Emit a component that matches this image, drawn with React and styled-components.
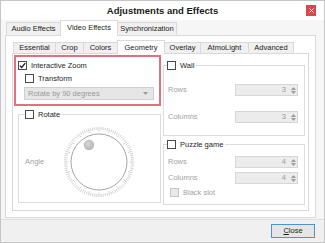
import React from 'react';
import styled, { createGlobalStyle } from 'styled-components';

const Global = createGlobalStyle`
  html, body { margin: 0; padding: 0; background: #ffffff; }
  body { font-family: "Liberation Sans", Arial, sans-serif; }
  #root { width: 325px; height: 243px; }
`;

const Window = styled.div`
  width: 325px;
  height: 243px;
  box-sizing: border-box;
  border: 1px solid #c6c6c6;
  background: #f6f6f6;
  display: flex;
  flex-direction: column;
  font-size: 7.5px;
  color: #1e1e1e;
  overflow: hidden;
`;

const TitleBar = styled.div`
  height: 19px;
  flex: none;
  background: #ffffff;
  display: grid;
  grid-template-columns: 1fr auto 1fr;
  align-items: center;
`;

const Title = styled.div`
  grid-column: 2;
  font-weight: bold;
  font-size: 9.5px;
  color: #1a1a1a;
`;

const CloseX = styled.div`
  grid-column: 3;
  justify-self: end;
  margin-right: 8px;
  width: 10px;
  height: 11px;
  background: #d8474b;
  display: flex;
  align-items: center;
  justify-content: center;
`;

const Body = styled.div`
  flex: 1;
  display: flex;
  flex-direction: column;
  padding: 0 8px 1px 4px;
  min-height: 0;
`;

const TabRow = styled.div`
  display: flex;
  align-items: flex-start;
  height: ${p => p.$h}px;
  margin-bottom: -1px;
  padding-left: ${p => p.$pl}px;
  margin-top: ${p => p.$mt || 0}px;
  position: relative;
  z-index: 1;
  flex: none;
`;

const Tab = styled.div`
  box-sizing: border-box;
  width: ${p => p.$w}px;
  height: ${p => (p.$active ? p.$h + 3 : p.$h)}px;
  margin-top: ${p => (p.$active ? 0 : 2)}px;
  border: 1px solid #d9d9d9;
  border-bottom: ${p => (p.$active ? 'none' : '1px solid transparent')};
  margin-left: -1px;
  background: ${p => (p.$active ? '#ffffff' : '#f0f0f0')};
  display: flex;
  align-items: ${p => (p.$active ? 'flex-start' : 'center')};
  padding-top: ${p => (p.$active ? 3 : 0)}px;
  justify-content: center;
  color: #222;
  white-space: nowrap;
  line-height: 1;
`;

const Pane = styled.div`
  flex: 1;
  min-height: 0;
  border: 1px solid #d9d9d9;
  background: #ffffff;
  display: flex;
  flex-direction: column;
`;

const InnerPane = styled.div`
  flex: 1;
  min-height: 0;
  margin: 0 6px 6px 6px;
  border: 1px solid #d9d9d9;
  background: #ffffff;
  display: grid;
  grid-template-columns: 147px 142px;
  column-gap: 2px;
  padding: 1px 0 0 1px;
  align-items: start;
`;

const Column = styled.div`
  display: flex;
  flex-direction: column;
`;

const Highlight = styled.div`
  border: 2px solid #e3707c;
  padding: 4px 5px 4px 2px;
  display: flex;
  flex-direction: column;
  gap: 4px;
`;

const CheckRow = styled.label`
  display: flex;
  align-items: center;
  gap: 4px;
  height: 9px;
  margin-left: ${p => p.$indent || 0}px;
  color: ${p => (p.$disabled ? '#a2a2a2' : '#1e1e1e')};
  line-height: 1;
  white-space: nowrap;
`;

const Box = styled.span`
  box-sizing: border-box;
  width: 9px;
  height: 9px;
  flex: none;
  border: 1px solid ${p => (p.$disabled ? '#c4c4c4' : '#4a4a4a')};
  background: ${p => (p.$disabled ? '#e9e9e9' : '#ffffff')};
  display: flex;
  align-items: center;
  justify-content: center;
`;

const Combo = styled.div`
  box-sizing: border-box;
  height: 13px;
  margin-left: 6px;
  border: 1px solid #cfcfcf;
  background: #e6e6e6;
  color: #9a9a9a;
  display: flex;
  align-items: center;
  justify-content: space-between;
  padding: 0 5px 0 3px;
  line-height: 1;
`;

const Group = styled.div`
  border: 1px solid #dcdcdc;
  margin-top: ${p => p.$mt}px;
  margin-left: ${p => p.$ml || 0}px;
  height: ${p => p.$h}px;
  box-sizing: border-box;
  display: flex;
  flex-direction: column;
`;

const Legend = styled.div`
  margin-top: -5px;
  margin-left: ${p => p.$ml}px;
  align-self: flex-start;
  background: #ffffff;
  padding-right: 2px;
`;

const DialRow = styled.div`
  flex: 1;
  display: flex;
  align-items: center;
  padding: 5px 0 2px 6px;
  gap: 19px;
`;

const Muted = styled.span`
  color: #a2a2a2;
  line-height: 1;
`;

const Form = styled.div`
  display: flex;
  flex-direction: column;
  gap: ${p => p.$gap}px;
  padding: ${p => p.$pt}px 6px 0 4px;
`;

const FormRow = styled.div`
  display: flex;
  align-items: center;
  justify-content: space-between;
  height: 12px;
`;

const Spin = styled.div`
  box-sizing: border-box;
  width: 63px;
  height: 12px;
  border: 1px solid #d6d6d6;
  background: #ececec;
  display: flex;
  align-items: center;
  justify-content: flex-end;
  color: #9a9a9a;
  line-height: 1;
`;

const SpinArrows = styled.div`
  width: 8px;
  height: 100%;
  margin-left: 3px;
  display: flex;
  flex-direction: column;
  align-items: center;
  justify-content: center;
  gap: 1px;
`;

const ButtonBar = styled.div`
  height: 22px;
  flex: none;
  background: #f0f0f0;
  border-top: 1px solid #dedede;
  display: flex;
  align-items: center;
  justify-content: flex-end;
  padding-right: 9px;
`;

const Button = styled.div`
  box-sizing: border-box;
  width: 44px;
  height: 14px;
  border: 1px solid #4a94d8;
  background: #e5e5e5;
  display: flex;
  align-items: center;
  justify-content: center;
  color: #1e1e1e;
  line-height: 1;
  span { text-decoration: underline; }
`;

const Check = () => (
  <svg width="7" height="7" viewBox="0 0 7 7">
    <path d="M0.8 3.6 L2.7 5.5 L6.2 1.2" fill="none" stroke="#1a1a1a" strokeWidth="1.3" />
  </svg>
);

const Tri = ({ up }) => (
  <svg width="5" height="3" viewBox="0 0 5 3">
    <path d={up ? 'M0 3 L2.5 0 L5 3 Z' : 'M0 0 L2.5 3 L5 0 Z'} fill="#9a9a9a" />
  </svg>
);

function Dial() {
  const c = 36;
  const ticks = [];
  const n = 100;
  for (let i = 0; i < n; i++) {
    const a = (i / n) * 2 * Math.PI;
    const long = i % 5 === 0;
    const r1 = long ? 30.5 : 32;
    const r2 = 35;
    ticks.push(
      <line
        key={i}
        x1={c + r1 * Math.cos(a)}
        y1={c + r1 * Math.sin(a)}
        x2={c + r2 * Math.cos(a)}
        y2={c + r2 * Math.sin(a)}
        stroke="#a8a8a8"
        strokeWidth="0.55"
      />
    );
  }
  return (
    <svg width="72" height="72" viewBox="0 0 72 72">
      <defs>
        <radialGradient id="knob" cx="0.4" cy="0.35" r="0.7">
          <stop offset="0" stopColor="#d8d8d8" />
          <stop offset="1" stopColor="#b4b4b4" />
        </radialGradient>
      </defs>
      {ticks}
      <circle cx={c} cy={c} r="28" fill="#ffffff" stroke="#8e8e8e" strokeWidth="0.8" />
      <circle cx={c - 10} cy={c - 17} r="4.8" fill="url(#knob)" stroke="#a8a8a8" strokeWidth="0.6" />
    </svg>
  );
}

const outerTabs = [
  { label: 'Audio Effects', w: 55 },
  { label: 'Video Effects', w: 58, active: true },
  { label: 'Synchronization', w: 60 },
];

const innerTabs = [
  { label: 'Essential', w: 43 },
  { label: 'Crop', w: 29 },
  { label: 'Colors', w: 35 },
  { label: 'Geometry', w: 48, active: true },
  { label: 'Overlay', w: 37 },
  { label: 'AtmoLight', w: 49 },
  { label: 'Advanced', w: 46 },
];

export default function App() {
  return (
    <>
      <Global />
      <Window>
        <TitleBar>
          <Title>Adjustments and Effects</Title>
          <CloseX>
            <svg width="5" height="5" viewBox="0 0 5 5">
              <path d="M0.5 0.5 L4.5 4.5 M4.5 0.5 L0.5 4.5" stroke="#ffffff" strokeWidth="1" />
            </svg>
          </CloseX>
        </TitleBar>
        <Body>
          <TabRow $h={16} $pl={2}>
            {outerTabs.map(t => (
              <Tab key={t.label} $w={t.w} $h={13} $active={t.active}>
                {t.label}
              </Tab>
            ))}
          </TabRow>
          <Pane>
            <TabRow $h={14} $pl={8} $mt={4}>
              {innerTabs.map(t => (
                <Tab key={t.label} $w={t.w} $h={11} $active={t.active}>
                  {t.label}
                </Tab>
              ))}
            </TabRow>
            <InnerPane>
              <Column>
                <Highlight>
                  <CheckRow>
                    <Box><Check /></Box>
                    Interactive Zoom
                  </CheckRow>
                  <CheckRow $indent={7}>
                    <Box />
                    Transform
                  </CheckRow>
                  <Combo>
                    <span>Rotate by 90 degrees</span>
                    <Tri />
                  </Combo>
                </Highlight>
                <Group $mt={8} $ml={4} $h={89}>
                  <Legend $ml={6}>
                    <CheckRow>
                      <Box />
                      Rotate
                    </CheckRow>
                  </Legend>
                  <DialRow>
                    <Muted>Angle</Muted>
                    <Dial />
                  </DialRow>
                </Group>
              </Column>
              <Column>
                <Group $mt={10} $h={71}>
                  <Legend $ml={3}>
                    <CheckRow>
                      <Box />
                      Wall
                    </CheckRow>
                  </Legend>
                  <Form $gap={15} $pt={14}>
                    <FormRow>
                      <Muted>Rows</Muted>
                      <Spin>3<SpinArrows><Tri up /><Tri /></SpinArrows></Spin>
                    </FormRow>
                    <FormRow>
                      <Muted>Columns</Muted>
                      <Spin>3<SpinArrows><Tri up /><Tri /></SpinArrows></Spin>
                    </FormRow>
                  </Form>
                </Group>
                <Group $mt={8} $h={61}>
                  <Legend $ml={3}>
                    <CheckRow>
                      <Box />
                      Puzzle game
                    </CheckRow>
                  </Legend>
                  <Form $gap={4} $pt={7}>
                    <FormRow>
                      <Muted>Rows</Muted>
                      <Spin>4<SpinArrows><Tri up /><Tri /></SpinArrows></Spin>
                    </FormRow>
                    <FormRow>
                      <Muted>Columns</Muted>
                      <Spin>4<SpinArrows><Tri up /><Tri /></SpinArrows></Spin>
                    </FormRow>
                    <CheckRow $indent={2} $disabled>
                      <Box $disabled />
                      Black slot
                    </CheckRow>
                  </Form>
                </Group>
              </Column>
            </InnerPane>
          </Pane>
        </Body>
        <ButtonBar>
          <Button><span>C</span>lose</Button>
        </ButtonBar>
      </Window>
    </>
  );
}
